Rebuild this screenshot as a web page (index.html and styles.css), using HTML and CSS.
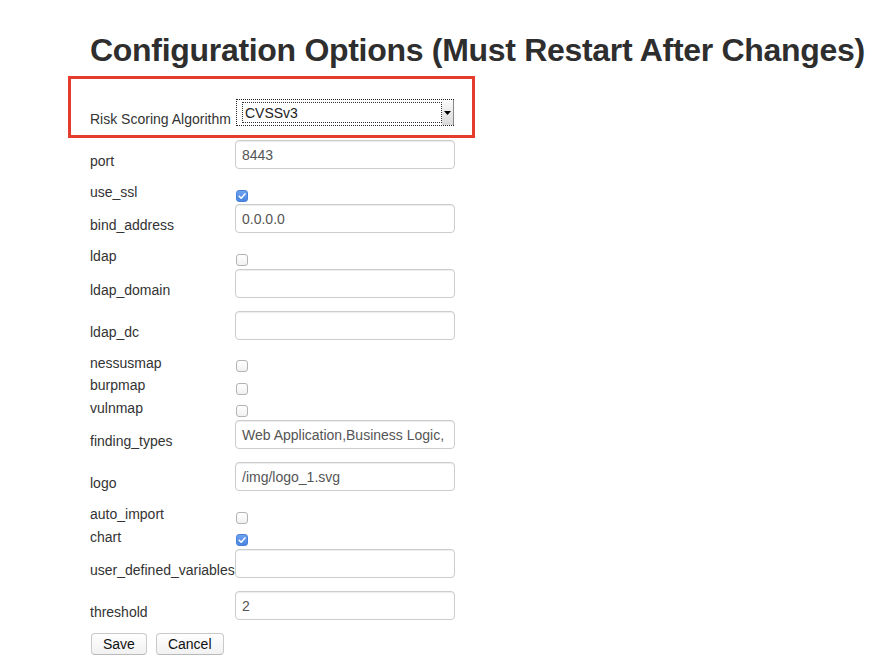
FILE: index.html
```html
<!DOCTYPE html>
<html lang="en">
<head>
<meta charset="utf-8">
<title>Configuration Options</title>
<link rel="stylesheet" href="styles.css">
</head>
<body>
<div class="page">
  <h1 class="title">Configuration Options (Must Restart After Changes)</h1>
  <form class="config">
    <div class="highlight">
      <div class="row row-select">
        <label class="lbl" for="algo">Risk Scoring Algorithm</label>
        <span class="select-wrap">
          <select class="select" id="algo"><option>CVSSv3</option><option>CVSSv2</option></select>
          <span class="select-arrow"><svg width="7" height="4" viewBox="0 0 7 4"><polygon points="0,0 7,0 3.5,4" fill="#000"/></svg></span>
        </span>
      </div>
    </div>

    <div class="row row-text"><label class="lbl" for="port">port</label><input class="text" id="port" value="8443"></div>
    <div class="row row-check"><label class="lbl">use_ssl</label><span class="cb"><input type="checkbox" checked><svg class="tick" viewBox="0 0 12 12"><path d="M3.2 6.3 L5.2 8.3 L8.9 3.9" fill="none" stroke="#fff" stroke-width="1.5" stroke-linecap="round" stroke-linejoin="round"/></svg></span></div>
    <div class="row row-text"><label class="lbl" for="bind">bind_address</label><input class="text" id="bind" value="0.0.0.0"></div>
    <div class="row row-check"><label class="lbl">ldap</label><span class="cb"><input type="checkbox"><svg class="tick" viewBox="0 0 12 12"><path d="M3.2 6.3 L5.2 8.3 L8.9 3.9" fill="none" stroke="#fff" stroke-width="1.5" stroke-linecap="round" stroke-linejoin="round"/></svg></span></div>
    <div class="row row-text"><label class="lbl" for="ldomain">ldap_domain</label><input class="text" id="ldomain" value=""></div>
    <div class="row row-text"><label class="lbl" for="ldc">ldap_dc</label><input class="text" id="ldc" value=""></div>
    <div class="row row-check"><label class="lbl">nessusmap</label><span class="cb"><input type="checkbox"><svg class="tick" viewBox="0 0 12 12"><path d="M3.2 6.3 L5.2 8.3 L8.9 3.9" fill="none" stroke="#fff" stroke-width="1.5" stroke-linecap="round" stroke-linejoin="round"/></svg></span></div>
    <div class="row row-check"><label class="lbl">burpmap</label><span class="cb"><input type="checkbox"><svg class="tick" viewBox="0 0 12 12"><path d="M3.2 6.3 L5.2 8.3 L8.9 3.9" fill="none" stroke="#fff" stroke-width="1.5" stroke-linecap="round" stroke-linejoin="round"/></svg></span></div>
    <div class="row row-check"><label class="lbl">vulnmap</label><span class="cb"><input type="checkbox"><svg class="tick" viewBox="0 0 12 12"><path d="M3.2 6.3 L5.2 8.3 L8.9 3.9" fill="none" stroke="#fff" stroke-width="1.5" stroke-linecap="round" stroke-linejoin="round"/></svg></span></div>
    <div class="row row-text"><label class="lbl" for="ftypes">finding_types</label><input class="text" id="ftypes" value="Web Application,Business Logic,"></div>
    <div class="row row-text"><label class="lbl" for="logo">logo</label><input class="text" id="logo" value="/img/logo_1.svg"></div>
    <div class="row row-check"><label class="lbl">auto_import</label><span class="cb"><input type="checkbox"><svg class="tick" viewBox="0 0 12 12"><path d="M3.2 6.3 L5.2 8.3 L8.9 3.9" fill="none" stroke="#fff" stroke-width="1.5" stroke-linecap="round" stroke-linejoin="round"/></svg></span></div>
    <div class="row row-check"><label class="lbl">chart</label><span class="cb"><input type="checkbox" checked><svg class="tick" viewBox="0 0 12 12"><path d="M3.2 6.3 L5.2 8.3 L8.9 3.9" fill="none" stroke="#fff" stroke-width="1.5" stroke-linecap="round" stroke-linejoin="round"/></svg></span></div>
    <div class="row row-text"><label class="lbl" for="udv">user_defined_variables</label><input class="text" id="udv" value=""></div>
    <div class="row row-text"><label class="lbl" for="thr">threshold</label><input class="text" id="thr" value="2"></div>

    <div class="actions">
      <button type="button" class="btn">Save</button>
      <button type="button" class="btn">Cancel</button>
    </div>
  </form>
</div>
</body>
</html>
```

FILE: styles.css
```css
* { box-sizing: border-box; }

body {
  margin: 0;
  background: #fff;
  color: #333;
  font-family: "Liberation Sans", Arial, Helvetica, sans-serif;
}

.page {
  padding: 30px 0 0 90px;
}

.title {
  margin: 0;
  font-size: 32px;
  line-height: 40px;
  font-weight: bold;
  letter-spacing: -0.3px;
  color: #2e2e2e;
  white-space: nowrap;
}

.config {
  display: block;
}

.highlight {
  width: 407px;
  margin: 6px 0 2px -22px;
  padding: 20px 18px 6px 19px;
  border: 3px solid #e63c2e;
}

.row {
  display: flex;
  align-items: flex-start;
}

.lbl {
  flex: none;
  width: 145px;
  font-size: 14px;
  line-height: 20px;
  color: #333;
  white-space: nowrap;
}

.row-select { height: 30px; }
.row-select .lbl { margin-top: 10px; }

.row-text { height: 42px; }
.row-text .lbl { margin-top: 11px; }

.row-check { height: 22.45px; }

.text {
  width: 220px;
  height: 29px;
  margin: 0;
  padding: 0 6px;
  border: 1px solid #ccc;
  border-radius: 4px;
  background: #fff;
  box-shadow: inset 0 1px 1px rgba(0, 0, 0, 0.075);
  font-family: "Liberation Sans", Arial, sans-serif;
  font-size: 14px;
  color: #555;
  outline: none;
}

/* select */
.select-wrap {
  display: flex;
  width: 218px;
  height: 27px;
  margin-left: 1px;
  border: 1px dotted #222;
  background: #fff;
}

.select {
  appearance: none;
  -webkit-appearance: none;
  flex: 1;
  height: 21px;
  margin: 2px 0 2px 5px;
  padding: 1px 2px 0;
  border: 1px dotted #333;
  border-radius: 0;
  background: transparent;
  font-family: "Liberation Sans", Arial, sans-serif;
  font-size: 14px;
  line-height: 19px;
  color: #222;
  outline: none;
}

.select-arrow {
  flex: none;
  width: 12px;
  display: flex;
  align-items: center;
  justify-content: center;
  background: linear-gradient(#fbfbfb, #d9d9d9);
  border-right: 1px solid #888;
  margin: 0 -1px 0 0;
}

/* checkboxes */
.cb {
  position: relative;
  display: block;
  width: 12px;
  height: 12px;
  margin: 7.5px 0 0 1px;
}

.cb input {
  appearance: none;
  -webkit-appearance: none;
  display: block;
  width: 12px;
  height: 12px;
  margin: 0;
  border: 1px solid #b3b3b3;
  border-radius: 3px;
  background: linear-gradient(#fff, #f1f1f1);
}

.cb input:checked {
  border-color: #4a80d6;
  background: linear-gradient(#6da2f1, #4b85e1);
}

.tick {
  position: absolute;
  left: 0;
  top: 0;
  width: 12px;
  height: 12px;
  display: none;
  pointer-events: none;
}

.cb input:checked + .tick { display: block; }

/* buttons */
.actions {
  display: flex;
  gap: 9px;
  margin: -0.5px 0 0 1px;
}

.btn {
  height: 22px;
  margin: 0;
  padding: 0 11px;
  border: 1px solid #c9c9c9;
  border-bottom-color: #b9b9b9;
  border-radius: 4px;
  background: linear-gradient(#fff, #f1f1f1);
  font-family: "Liberation Sans", Arial, sans-serif;
  font-size: 14px;
  line-height: 20px;
  color: #111;
}
```
